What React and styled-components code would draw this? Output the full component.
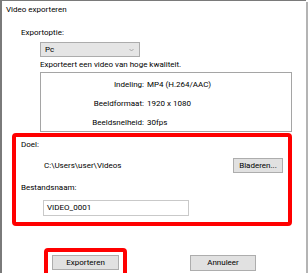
import React from "react";
import styled, { createGlobalStyle } from "styled-components";

const Global = createGlobalStyle`
  html, body { margin: 0; padding: 0; background: #ffffff; }
  body { font-family: Roboto, "Noto Sans", "Liberation Sans", sans-serif; font-size: 8px; color: #000; }
  * { box-sizing: border-box; }
`;

const Window = styled.div`
  width: 306px;
  height: 273px;
  border-top: 1px solid #7a7a7a;
  border-left: 2px solid #7a7a7a;
  box-shadow: 2px 2px 0 #b4b4b4;
  background: #fff;
  display: flex;
  flex-direction: column;
`;

const Title = styled.div`
  padding: 3px 0 0 4px;
  line-height: 12px;
  font-size: 8px;
`;

const Label = styled.div`
  line-height: 12px;
  margin-left: ${p => p.$indent}px;
  margin-top: ${p => p.$top}px;
`;

const OptionGroup = styled.div`
  margin-left: 38px;
  width: 252px;
  display: flex;
  flex-direction: column;
`;

const Select = styled.div`
  margin-top: 3px;
  width: 100px;
  height: 15px;
  background: #e5e5e5;
  border: 1px solid #acacac;
  display: flex;
  align-items: center;
  justify-content: space-between;
  padding: 0 5px 0 4px;
  line-height: 12px;
`;

const Desc = styled.div`
  margin-top: 2px;
  line-height: 12px;
`;

const InfoBox = styled.div`
  margin-top: 1px;
  height: 60px;
  border: 1px solid #a5a5a5;
  padding-top: 2px;
  display: grid;
  grid-template-columns: 103px 1fr;
  grid-auto-rows: 19px;
  column-gap: 3px;
  align-items: center;
`;

const InfoLabel = styled.span`
  text-align: right;
`;

const Highlight = styled.div`
  margin: 1px 0 0 10px;
  width: 280px;
  border: 4px solid #ff0000;
  border-radius: 4px;
  padding: 2px 5px 6px 5px;
  display: flex;
  flex-direction: column;
`;

const PathRow = styled.div`
  margin-top: 7px;
  height: 15px;
  display: flex;
  align-items: center;
  justify-content: space-between;
  padding-left: 23px;
`;

const Button = styled.button`
  font: inherit;
  font-size: 8px;
  color: #000;
  width: ${p => p.$w}px;
  height: ${p => p.$h}px;
  background: #e1e1e1;
  border: 1px solid #adadad;
  padding: 0;
  margin: 0;
  line-height: 12px;
  display: flex;
  align-items: center;
  justify-content: center;
`;

const TextInput = styled.div`
  margin: 6px 0 0 22px;
  width: 146px;
  height: 16px;
  border: 1px solid #c9c9c9;
  background: #fff;
  padding-left: 3px;
  display: flex;
  align-items: center;
  line-height: 12px;
`;

const Footer = styled.div`
  margin: 22px 0 0 42px;
  display: flex;
  align-items: center;
  gap: 63px;
`;

const RedFrame = styled.div`
  border: 4px solid #ff0000;
  border-radius: 4px;
  padding: 3px 4px 3px 4px;
  display: flex;
`;

const Chevron = () => (
  <svg width="5" height="4" viewBox="0 0 5 4">
    <path d="M0.5 1 L2.5 3 L4.5 1" fill="none" stroke="#9a9a9a" strokeWidth="0.8" />
  </svg>
);

export default function App() {
  return (
    <>
      <Global />
      <Window>
        <Title>Video exporteren</Title>
        <Label $indent={19} $top={11}>Exportoptie:</Label>
        <OptionGroup>
          <Select>
            <span>Pc</span>
            <Chevron />
          </Select>
          <Desc>Exporteert een video van hoge kwaliteit.</Desc>
          <InfoBox>
            <InfoLabel>Indeling:</InfoLabel>
            <span>MP4 (H.264/AAC)</span>
            <InfoLabel>Beeldformaat:</InfoLabel>
            <span>1920 x 1080</span>
            <InfoLabel>Beeldsnelheid:</InfoLabel>
            <span>30fps</span>
          </InfoBox>
        </OptionGroup>
        <Highlight>
          <Label $indent={0} $top={0}>Doel:</Label>
          <PathRow>
            <span>C:\Users\user\Videos</span>
            <Button $w={50} $h={15}>Bladeren...</Button>
          </PathRow>
          <Label $indent={0} $top={9}>Bestandsnaam:</Label>
          <TextInput>VIDEO_0001</TextInput>
        </Highlight>
        <Footer>
          <RedFrame>
            <Button $w={67} $h={15}>Exporteren</Button>
          </RedFrame>
          <Button $w={66} $h={16}>Annuleer</Button>
        </Footer>
      </Window>
    </>
  );
}
